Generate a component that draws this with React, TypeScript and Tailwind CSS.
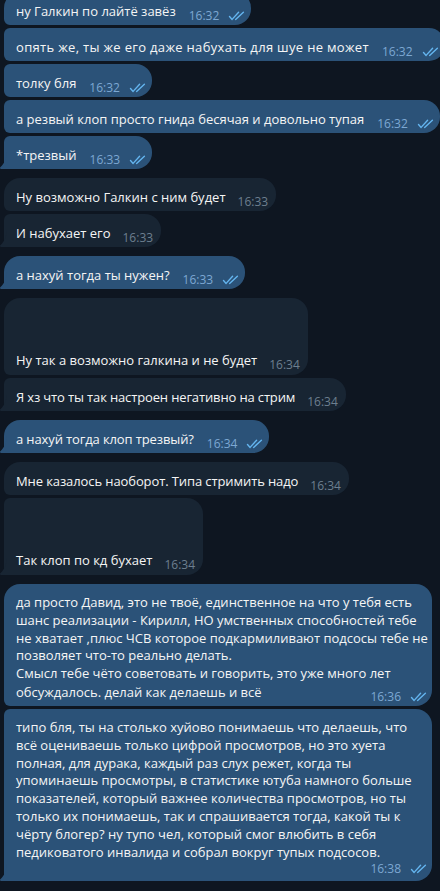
import React from "react";

type Msg = {
  lines: string[];
  time: string;
  out?: boolean;
  tail?: boolean;
  first?: boolean;
  tall?: boolean;
  big?: boolean;
  metaRow?: boolean;
  track?: string;
};

const msgs: Msg[] = [
  { lines: ["ну Галкин по лайтё завёз"], time: "16:32", out: true, first: true },
  { lines: ["опять же, ты же его даже набухать для шуе не может"], time: "16:32", out: true, track: "tracking-[0.32px]" },
  { lines: ["толку бля"], time: "16:32", out: true },
  { lines: ["а резвый клоп просто гнида бесячая и довольно тупая"], time: "16:32", out: true },
  { lines: ["*трезвый"], time: "16:33", out: true, tail: true },
  { lines: ["Ну возможно Галкин с ним будет"], time: "16:33", first: true },
  { lines: ["И набухает его"], time: "16:33", tail: true },
  { lines: ["а нахуй тогда ты нужен?"], time: "16:33", out: true, first: true, tail: true },
  { lines: ["Ну так а возможно галкина и не будет"], time: "16:34", first: true, tall: true },
  { lines: ["Я хз что ты так настроен негативно на стрим"], time: "16:34", tail: true, track: "tracking-[-0.14px]" },
  { lines: ["а нахуй тогда клоп трезвый?"], time: "16:34", out: true, first: true, tail: true, track: "tracking-[-0.12px]" },
  { lines: ["Мне казалось наоборот. Типа стримить надо"], time: "16:34", first: true, track: "tracking-[-0.1px]" },
  { lines: ["Так клоп по кд бухает"], time: "16:34", tall: true, tail: true },
  {
    lines: [
      "да просто Давид, это не твоё, единственное на что у тебя есть",
      "шанс реализации - Кирилл, НО умственных способностей тебе",
      "не хватает ,плюс ЧСВ которое подкармиливают подсосы тебе не",
      "позволяет что-то реально делать.",
      "Смысл тебе чёто советовать и говорить, это уже много лет",
      "обсуждалось. делай как делаешь и всё",
    ],
    time: "16:36",
    out: true,
    first: true,
    big: true,
  },
  {
    lines: [
      "типо бля, ты на столько хуйово понимаешь что делаешь, что",
      "всё оцениваешь только цифрой просмотров, но это хуета",
      "полная, для дурака, каждый раз слух режет, когда ты",
      "упоминаешь просмотры, в статистике ютуба намного больше",
      "показателей, который важнее количества просмотров, но ты",
      "только их понимаешь, так и спрашивается тогда, какой ты к",
      "чёрту блогер? ну тупо чел, который смог влюбить в себя",
      "педиковатого инвалида и собрал вокруг тупых подсосов.",
    ],
    time: "16:38",
    out: true,
    big: true,
    tail: true,
    metaRow: true,
  },
];

function Checks() {
  return (
    <svg width="17" height="10" viewBox="0 0 17 10" fill="none" stroke="currentColor" strokeWidth="1.4" strokeLinecap="round" strokeLinejoin="round" className="ml-[9px] text-[#64b5ef]">
      <path d="M1.5 5.6l2.6 2.8L10.6 1.2" />
      <path d="M7.6 8.4L15.4 1.2" />
    </svg>
  );
}

function Meta({ m }: { m: Msg }) {
  return (
    <span className={`flex items-center text-[12px] leading-[16px] tracking-normal whitespace-nowrap ${m.out ? "text-[#7da8d3]" : "text-[#6d7f8f]"}`}>
      {m.time}
      {m.out && <Checks />}
    </span>
  );
}

function Bubble({ m }: { m: Msg }) {
  const bg = m.out ? "bg-[#2b5278]" : "bg-[#182533]";
  const tl = m.first ? "rounded-tl-[16px]" : "rounded-tl-[6px]";
  const bl = m.tail ? "rounded-bl-none" : "rounded-bl-[6px]";
  const last = m.lines[m.lines.length - 1];
  const body = m.metaRow ? m.lines : m.lines.slice(0, -1);

  return (
    <div
      className={`relative self-start rounded-r-[16px] ${tl} ${bl} ${bg} pl-3 ${
        m.big ? "w-[428px] pr-[5px]" : m.out ? "pr-[6px]" : "pr-[8px]"
      } ${m.tall ? "pt-[53px] pb-[6px]" : "pt-[10px] pb-[5px]"} ${m.first ? "mt-[9px]" : "mt-[3px]"}`}
    >
      {body.map((l, i) => (
        <div key={i} className="leading-[17.8px] whitespace-nowrap">
          {l}
        </div>
      ))}
      {m.metaRow ? (
        <div className="flex h-[15px] items-center justify-end">
          <Meta m={m} />
        </div>
      ) : (
        <div className="flex h-[18px] items-end">
          <span className={`leading-[18px] whitespace-nowrap ${m.track ?? ""}`}>{last}</span>
          <span className={`ml-auto -mb-[4px] ${m.out ? "pl-[13px]" : "pl-[12px]"}`}>
            <Meta m={m} />
          </span>
        </div>
      )}
      {m.tail && (
        <svg width="9" height="17" viewBox="0 0 9 17" className={`absolute -left-[6px] bottom-0 ${m.out ? "text-[#2b5278]" : "text-[#182533]"}`}>
          <path fill="currentColor" d="M3 17h6V0c-.193 2.84-.876 5.767-2.05 8.782-.904 2.325-2.446 4.485-4.625 6.48A1 1 0 003 17z" />
        </svg>
      )}
    </div>
  );
}

export default function App() {
  return (
    <div className="h-[891px] w-[440px] overflow-hidden bg-[#0e1621] font-['Open_Sans',sans-serif] text-[13px] text-[#f5f5f5]">
      <div className="-mt-[17px] flex flex-col pl-[4px]">
        {msgs.map((m, i) => (
          <Bubble key={i} m={m} />
        ))}
      </div>
    </div>
  );
}
